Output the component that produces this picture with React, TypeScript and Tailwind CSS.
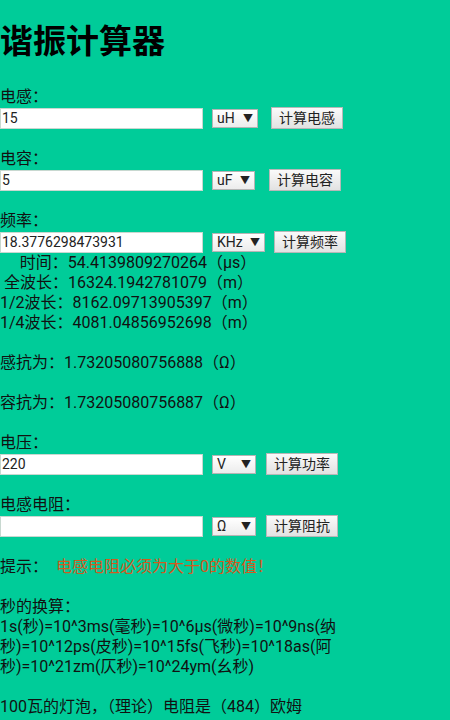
const font = { fontFamily: "Roboto, 'Noto Sans CJK SC', sans-serif" };

function Row({ value, unit, selW, btn, btnGap }: { value: string; unit: string; selW: string; btn: string; btnGap: string }) {
  return (
    <div className="flex h-[22px] items-center">
      <div className="flex h-[21px] w-[203px] items-center border border-[#c8d8d0] bg-white pl-[1px] text-[14px] text-[#222]">
        {value}
      </div>
      <div
        className={`ml-[9px] flex h-[19px] items-center justify-between border border-[#b5b5b5] bg-gradient-to-b from-white to-[#ececec] pl-[4px] pr-[4px] text-[14px] text-[#222] ${selW}`}
      >
        <span>{unit}</span>
        <span className="text-[10px]">▼</span>
      </div>
      <div
        className={`flex h-[22px] items-center border border-[#b8b8b8] bg-gradient-to-b from-[#fafafa] to-[#e2e2e2] px-[7px] text-[14px] text-[#222] ${btnGap}`}
      >
        {btn}
      </div>
    </div>
  );
}

const L = ({ children, className = '' }: { children?: React.ReactNode; className?: string }) => (
  <div className={`h-5 whitespace-pre leading-5 ${className}`}>{children}</div>
);

export default function App() {
  return (
    <div className="min-h-screen bg-[#00cc99] text-[16px] text-[#111]" style={font}>
      <h1 className="pt-[22px] text-[33px] font-bold leading-[40px] text-black">谐振计算器</h1>
      <div className="mt-[25px]">
        <L>电感：</L>
        <Row value="15" unit="uH" selW="w-[46px]" btn="计算电感" btnGap="ml-[13px]" />
        <L />
        <L>电容：</L>
        <Row value="5" unit="uF" selW="w-[43px]" btn="计算电容" btnGap="ml-[14px]" />
        <L />
        <L>频率：</L>
        <Row value="18.3776298473931" unit="KHz" selW="w-[53px]" btn="计算频率" btnGap="ml-[9px]" />
        <L>{'\u00a0\u00a0\u00a0\u00a0\u00a0时间：54.4139809270264（μs）'}</L>
        <L>{'\u00a0全波长：16324.1942781079（m）'}</L>
        <L>1/2波长：8162.09713905397（m）</L>
        <L>1/4波长：4081.04856952698（m）</L>
        <L />
        <L>感抗为：1.73205080756888（Ω）</L>
        <L />
        <L>容抗为：1.73205080756887（Ω）</L>
        <L />
        <L>电压：</L>
        <Row value="220" unit="V" selW="w-[44px]" btn="计算功率" btnGap="ml-[10px]" />
        <L />
        <L>电感电阻：</L>
        <Row value="" unit="Ω" selW="w-[44px]" btn="计算阻抗" btnGap="ml-[10px]" />
        <L />
        <L>
          提示：<span className="ml-[8px] text-[#d35a1e]">电感电阻必须为大于0的数值！</span>
        </L>
        <L />
        <L>秒的换算：</L>
        <L>1s(秒)=10^3ms(毫秒)=10^6μs(微秒)=10^9ns(纳</L>
        <L>秒)=10^12ps(皮秒)=10^15fs(飞秒)=10^18as(阿</L>
        <L>秒)=10^21zm(仄秒)=10^24ym(幺秒)</L>
        <L />
        <L>100瓦的灯泡，（理论）电阻是（484）欧姆</L>
      </div>
    </div>
  );
}
